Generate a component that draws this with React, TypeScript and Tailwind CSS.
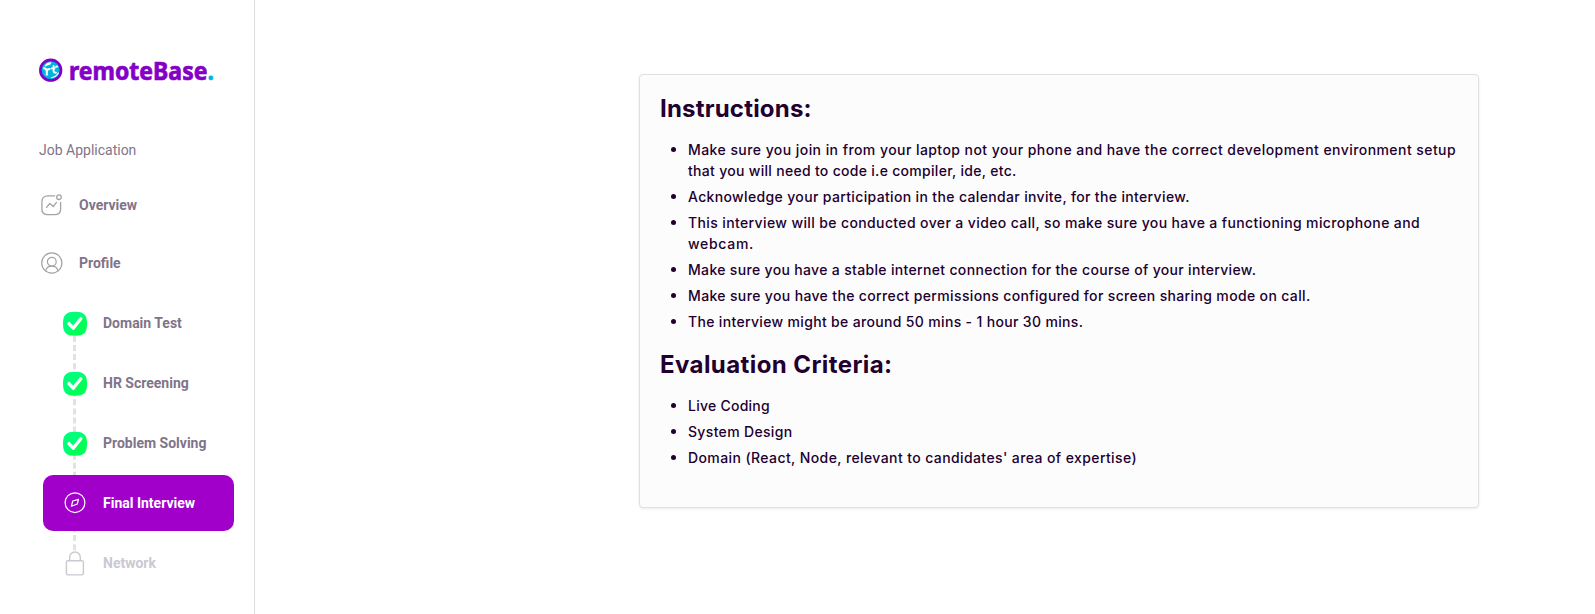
import type { ReactNode } from "react";

function LogoMark() {
  return (
    <svg width="24" height="24" viewBox="0 0 24 24" fill="none">
      <circle cx="11.7" cy="12.2" r="10.3" fill="#00b4e0" stroke="#8400c6" strokeWidth="2.7" />
      <path d="M5.400 8.200Q7.600 3.800 12.600 4.200L11.400 6.600 8.200 7.400 6 8.800z" fill="#fff" />
      <path d="M4.200 10.200Q7.200 10 7.800 12.600V17.400M7.800 13.200q.6-2.600 3.600-2.200" stroke="#fff" strokeWidth="2.100" />
      <path d="M14.600 8V13q0 2 2.400 1.600M12.800 10.400H15.400M17 9l1.200-.6" stroke="#fff" strokeWidth="1.900" strokeLinecap="round" />
      <path d="M12.800 19.600q4.800-.8 6.600-4.600" stroke="#fff" strokeWidth="1.200" strokeLinecap="round" />
    </svg>
  );
}

function OverviewIcon() {
  return (
    <svg width="22" height="22" viewBox="0 0 22 22" fill="none" stroke="#a3a3a3" strokeWidth="1.3" strokeLinecap="round" strokeLinejoin="round">
      <path d="M13.600 1.900H7Q.9 1.900 .9 7.700v7.600Q.9 20.700 7 20.700h6.600q6 0 6-5.400V8.400" />
      <circle cx="18" cy="3.200" r="2.300" />
      <path d="m5.600 13.400 3.200-3.900 3.400 3.100 3.300-4.200" />
    </svg>
  );
}

function ProfileIcon() {
  return (
    <svg width="22" height="22" viewBox="0 0 22 22" fill="none" stroke="#a3a3a3" strokeWidth="1.2" strokeLinecap="round">
      <circle cx="10.800" cy="11" r="10.100" />
      <circle cx="10.800" cy="9.700" r="4.400" />
      <path d="M4.500 18.800q1.300-4.700 6.300-4.700t6.300 4.700" />
    </svg>
  );
}

function CheckIcon() {
  return (
    <svg width="24" height="25" viewBox="0 0 24 25" fill="none">
      <defs>
        <linearGradient id="done" x1="0" y1="0" x2="1" y2="1">
          <stop offset="0.500" stopColor="#00ff79" />
          <stop offset="0.560" stopColor="#00ff57" />
        </linearGradient>
      </defs>
      <g transform="translate(0 0.800)">
        <path d="M12 0C21 0 24 3 24 12s-3 12-12 12S0 21 0 12 3 0 12 0z" fill="url(#done)" />
        <path d="m6 11.800 4.200 4.600 7.600-9.400" stroke="#fff" strokeWidth="3.300" strokeLinecap="round" strokeLinejoin="round" />
      </g>
    </svg>
  );
}

function CompassIcon() {
  return (
    <svg className="-ml-px" width="22" height="22" viewBox="0 0 22 22" fill="none" stroke="#fff" strokeWidth="1.2" strokeLinejoin="round">
      <circle cx="11" cy="10.700" r="9.900" />
      <path d="m14.500 7.300-1.200 4.700-5.800 2.200 1.200-5.200z" />
    </svg>
  );
}

function LockIcon() {
  return (
    <svg width="24" height="25" viewBox="0 0 24 25" fill="none" stroke="#cbc8d2" strokeWidth="1.400">
      <rect x="3.400" y="9.700" width="17" height="14.200" rx="1.600" fill="#fff" />
      <path d="M6.700 9.700V6.300a5.300 5.300 0 0 1 10.600 0v3.400" />
    </svg>
  );
}

function Step({ icon, label, tone = "text-[#7f7489]" }: { icon: ReactNode; label: string; tone?: string }) {
  return (
    <li className="flex h-[60px] items-center pl-[20px]">
      <span className="relative flex w-6 justify-center">{icon}</span>
      <span className={`ml-4 ${tone}`}>{label}</span>
    </li>
  );
}

function Sidebar() {
  return (
    <aside className="h-[614px] w-[255px] shrink-0 border-r border-[#dedede] font-['Roboto',sans-serif] text-sm font-bold text-[#7f7489]">
      <div className="mt-[58px] flex h-6 items-center pl-[39px]">
        <LogoMark />
        <span className="ml-[6px] inline-block origin-left scale-x-[0.92] font-['Noto_Sans',sans-serif] text-[25px] leading-6 text-[#8400c6] [-webkit-text-stroke:0.7px_currentColor]">
          remoteBase<span className="text-[#00b4e0]">.</span>
        </span>
      </div>
      <h2 className="mt-[58px] pl-[39px] leading-5 font-normal">Job Application</h2>
      <nav className="mt-[16px]">
        <div className="flex h-[58px] items-center pl-[41px]">
          <OverviewIcon />
          <span className="ml-[16px]">Overview</span>
        </div>
        <div className="flex h-[58px] items-center pl-[41px]">
          <ProfileIcon />
          <span className="ml-[16px]">Profile</span>
        </div>
        <ul className="relative mt-px ml-[43px] w-[191px]">
          <svg className="absolute top-[43px] left-[30px]" width="3" height="216" viewBox="0 0 3 216">
            <path d="M1.500 0V216" stroke="#e2e2e2" strokeWidth="3" strokeDasharray="6 3.050" />
          </svg>
          <Step icon={<CheckIcon />} label="Domain Test" />
          <Step icon={<CheckIcon />} label="HR Screening" />
          <Step icon={<CheckIcon />} label="Problem Solving" />
          <li className="relative my-[2px] flex h-14 items-center rounded-[10px] bg-[#a100cb] pl-[20px] text-white">
            <span className="flex w-6 justify-center">
              <CompassIcon />
            </span>
            <span className="ml-4">Final Interview</span>
          </li>
          <Step icon={<LockIcon />} label="Network" tone="text-[#cbc8d2]" />
        </ul>
      </nav>
    </aside>
  );
}

function Item({ children }: { children: ReactNode }) {
  return (
    <li className="mb-[5px] flex">
      <span className="mt-[8px] mr-3 size-[5px] shrink-0 rounded-full bg-[#21002f]" />
      <div className="whitespace-nowrap">{children}</div>
    </li>
  );
}

export default function App() {
  return (
    <div className="flex h-[614px] overflow-hidden bg-white">
      <Sidebar />
      <main className="flex-1 pt-[74px] pl-[384px]">
        <section className="h-[434px] w-[840px] rounded border border-[#e0e0e0] bg-[#fcfcfc] pt-4 pl-5 font-['Inter',sans-serif] text-sm leading-[21px] font-medium text-[#21002f] shadow-[0_1px_3px_rgba(0,0,0,0.08)]">
          <h1 className="text-2xl leading-9 font-bold tracking-[0.2px]">Instructions:</h1>
          <ul className="mt-[12px] pl-[11px]">
            <Item>
              <p className="tracking-[0.438px]">Make sure you join in from your laptop not your phone and have the correct development environment setup</p>
              <p className="tracking-[0.3px]">that you will need to code i.e compiler, ide, etc.</p>
            </Item>
            <Item>
              <p className="tracking-[0.35px]">Acknowledge your participation in the calendar invite, for the interview.</p>
            </Item>
            <Item>
              <p className="tracking-[0.38px]">This interview will be conducted over a video call, so make sure you have a functioning microphone and</p>
              <p className="tracking-[0.7px]">webcam.</p>
            </Item>
            <Item>
              <p className="tracking-[0.33px]">Make sure you have a stable internet connection for the course of your interview.</p>
            </Item>
            <Item>
              <p className="tracking-[0.355px]">Make sure you have the correct permissions configured for screen sharing mode on call.</p>
            </Item>
            <Item>
              <p className="tracking-[0.335px]">The interview might be around 50 mins - 1 hour 30 mins.</p>
            </Item>
          </ul>
          <h1 className="mt-[15px] text-2xl leading-9 font-bold tracking-[0.42px]">Evaluation Criteria:</h1>
          <ul className="mt-[12px] pl-[11px]">
            <Item>
              <p className="tracking-[0.25px]">Live Coding</p>
            </Item>
            <Item>
              <p className="tracking-[0.33px]">System Design</p>
            </Item>
            <Item>
              <p className="tracking-[0.4px]">Domain (React, Node, relevant to candidates' area of expertise)</p>
            </Item>
          </ul>
        </section>
      </main>
    </div>
  );
}
